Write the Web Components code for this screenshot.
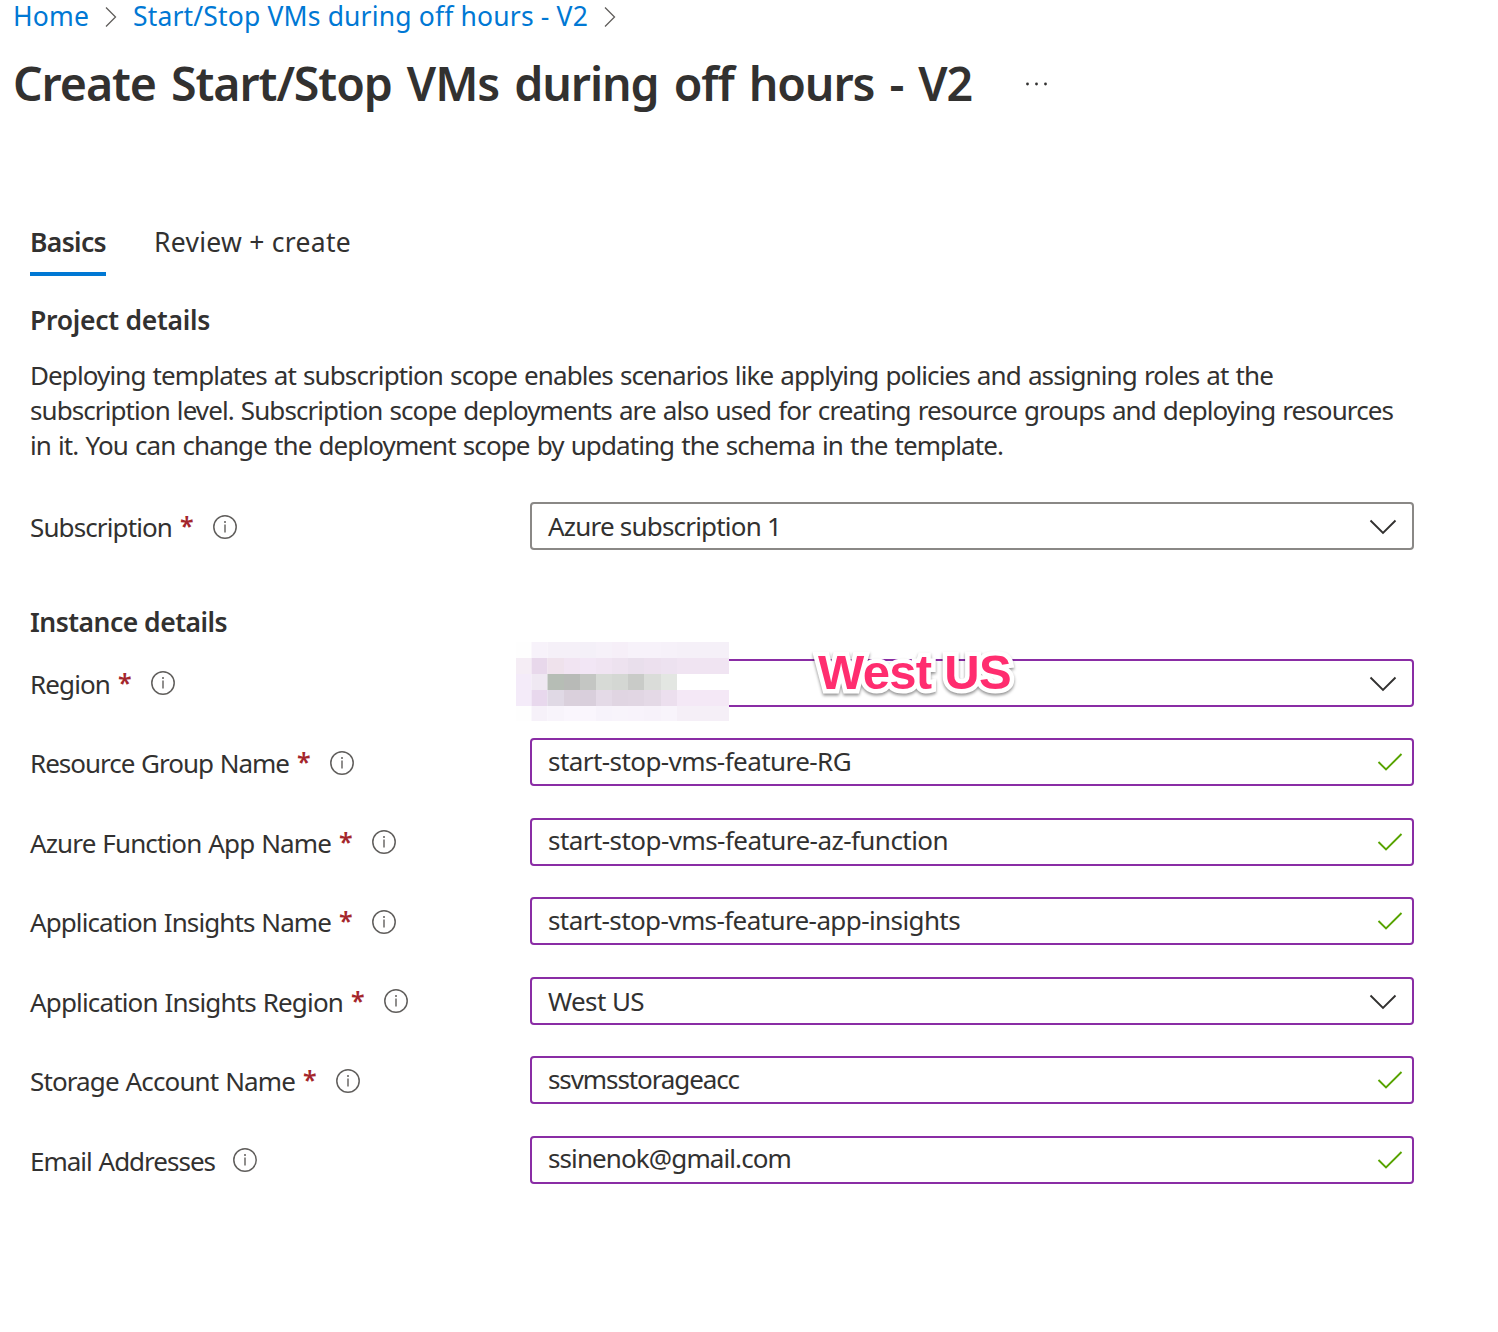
<!DOCTYPE html>
<html lang="en">
<head>
<meta charset="utf-8">
<title>Create Start/Stop VMs during off hours - V2</title>
<style>
html, body { margin: 0; background: #fff; }
body { font: 26px/35px "Noto Sans", "Open Sans", sans-serif; color: #323130; overflow: hidden; }
</style>
</head>
<body>
<azure-create-page></azure-create-page>
<script>
class Base extends HTMLElement {
  connectedCallback() {
    if (this.shadowRoot) return;
    this.attachShadow({ mode: 'open' }).innerHTML = this.render();
  }
  a(name) { return this.getAttribute(name) || ''; }
}

const chevronRight = `<svg width="12" height="22" viewBox="0 0 12 22"><path d="M1 1.5 10.5 11 1 20.5" fill="none" stroke="#605e5c" stroke-width="1.3"/></svg>`;

customElements.define('az-breadcrumb', class extends Base {
  render() {
    return `<style>
      :host { display: flex; align-items: flex-start; height: 36px; font-size: 26.5px; line-height: 33px; padding-left: 13px; color: #0078d4; }
      svg { display: block; margin-top: 6px; }
      svg:nth-of-type(1) { margin: 6px 16px 0 16px; }
      svg:nth-of-type(2) { margin-left: 16px; }
    </style><fit-text w="76">Home</fit-text>${chevronRight}<fit-text w="455">Start/Stop VMs during off hours - V2</fit-text>${chevronRight}`;
  }
});

customElements.define('az-title', class extends Base {
  render() {
    return `<style>
      :host { display: flex; height: 64px; line-height: 64px; padding-left: 13px; margin-top: 15px; font-size: 46.5px; font-weight: 600; word-spacing: 4px; }
      svg { display: block; margin: 30px 0 0 53px; }
    </style><fit-text w="959"><slot></slot></fit-text>
    <svg width="24" height="6" viewBox="0 0 24 6" fill="#323130"><circle cx="2.5" cy="3" r="1.4"/><circle cx="11.5" cy="3" r="1.4"/><circle cx="20.5" cy="3" r="1.4"/></svg>`;
  }
});

customElements.define('az-tab', class extends Base {
  render() {
    return `<style>
      :host { display: block; font-size: 26.5px; padding-bottom: 12px; border-bottom: 4px solid transparent; }
      :host([selected]) { border-color: #0078d4; font-weight: 600; }
    </style><fit-text w="${this.a('w')}"><slot></slot></fit-text>`;
  }
});

customElements.define('az-heading', class extends Base {
  render() {
    return `<style>:host { display: block; font-size: 26.5px; line-height: 36px; font-weight: 600; }</style><fit-text w="${this.a('w')}"><slot></slot></fit-text>`;
  }
});

customElements.define('az-info', class extends Base {
  render() {
    return `<style>:host { display: block; height: 24px; } svg { display: block; }</style>
    <svg width="24" height="24" viewBox="0 0 24 24"><circle cx="12" cy="12" r="11.2" fill="none" stroke="#605e5c" stroke-width="1.5"/><path d="M12 9.6V17.4" stroke="#605e5c" stroke-width="1.4"/><circle cx="12" cy="7" r="1" fill="#605e5c"/></svg>`;
  }
});

customElements.define('az-field', class extends Base {
  render() {
    const select = this.hasAttribute('select');
    const icon = select
      ? `<svg class="icon" width="28" height="16" viewBox="0 0 28 16"><path d="M1.5 1.5 14 14 26.5 1.5" fill="none" stroke="#323130" stroke-width="1.9"/></svg>`
      : `<svg class="icon" width="26" height="18" viewBox="0 0 26 18"><path d="M1.5 9 9 16.5 24.5 1" fill="none" stroke="#57a300" stroke-width="1.9"/></svg>`;
    return `<style>
      :host { display: flex; height: 48px; position: relative; }
      .label { width: 500px; display: flex; line-height: 50px; word-spacing: 1px; }
      .star { width: 13px; margin-left: 8px; color: #a4262c; font-size: 25px; font-weight: 600; line-height: 47px; }
      az-info { margin: 12.4px 0 0 20px; }
      :host([neutral]) az-info { margin-top: 13px; }
      az-info.plain { margin-left: 18px; }
      .box { box-sizing: border-box; width: 884px; height: 48px; border: 2px solid #8a2da5; border-radius: 4px; display: flex; justify-content: space-between; align-items: center; padding-left: 16px; line-height: 44px; }
      :host([neutral]) .box { border-color: #8a8886; }
      .value { margin-top: ${select ? 0 : -3}px; }
      .icon { display: block; margin: ${select ? '3px 15px 0 0' : '0 9px 0 0'}; }
      :host([neutral]) .icon { margin-top: 1px; }
    </style>
    <div class="label"><fit-text w="${this.a('lw')}">${this.a('label')}</fit-text>${this.hasAttribute('required') ? '<span class="star">*</span><az-info></az-info>' : '<az-info class="plain"></az-info>'}</div>
    <div class="box"><span class="value">${this.a('value') ? `<fit-text w="${this.a('vw')}">${this.a('value')}</fit-text>` : ''}</span>${icon}</div><slot></slot>`;
  }
});

/* Pixelated patch hiding the original region value. */
customElements.define('az-mosaic', class extends Base {
  render() {
    const xs = [0, 15.5, 31.5, 48, 64, 80, 96, 112, 128, 145, 161, 213];
    const ys = [0, 16, 32, 48, 64, 79];
    const rows = [
      '#fefefe #f7f2fa #f5f0f8 #f5f0f8 #f4f0f8 #f6f1f9 #f6eff8 #f7f2fa #f7f2fa #f6f1f9 #f5f0f8',
      '#f5edf5 #e8d8eb #efe2ec #f1e4f2 #f2e6f5 #f0e4f2 #ede2ef #e9dfec #ece0ee #ede2f0 #f0e4f2',
      '#f4ebf9 #efe8f2 #b6bdb5 #b8bab7 #c4c6c3 #d7dad6 #d4d7d3 #c9cbc8 #dadcd9 #e3e6e2 #ffffff',
      '#f4ebf9 #e8d8ed #e0d9e5 #dad0dc #d9cfdc #e4dae7 #e0d5e2 #e1d6e3 #e4d9e6 #ecdfee #f4e8f6',
      '#fefefe #f6f1f9 #f8f4fb #faf6fd #faf6fd #f7f3fb #f8f4fb #f8f3fb #f7f2fa #f8f4fb #f5eff7'];
    let rects = '';
    rows.forEach((row, j) => row.split(' ').forEach((c, i) => {
      rects += `<rect x="${xs[i]}" y="${ys[j]}" width="${xs[i + 1] - xs[i]}" height="${ys[j + 1] - ys[j]}" fill="${c}"/>`;
    }));
    return `<style>:host { position: absolute; left: 516px; top: -17px; } svg { display: block; }</style>
    <svg width="213" height="79" viewBox="0 0 213 79"><rect width="213" height="79" fill="#fff"/>${rects}</svg>`;
  }
});

customElements.define('az-callout', class extends Base {
  render() {
    return `<style>
      :host { position: absolute; left: 818px; top: -14.5px; font: bold 49px/56px "Liberation Sans", Arial, sans-serif; color: #ff2d6f;
        -webkit-text-stroke: 9px #fff; paint-order: stroke fill; stroke-linejoin: round; filter: drop-shadow(0 2px 1.5px rgba(0,0,0,.42)); }
    </style><fit-text w="193"><slot></slot></fit-text>`;
  }
});

customElements.define('azure-create-page', class extends Base {
  render() {
    return `<style>
      :host { display: flex; flex-direction: column; width: 1498px; height: 1332px; background: #fff; overflow: hidden; }
      .tabs { display: flex; gap: 48px; padding-left: 30px; margin-top: 110px; }
      .tabs az-tab { flex: none; }
      .body { display: flex; flex-direction: column; }
      .body > az-heading { padding-left: 30px; }
      .project { margin-top: 26px; }
      .instance { margin-top: 54px; }
      p { display: flex; flex-direction: column; margin: 20px 0 39px; padding-left: 30px; word-spacing: 1.2px; }
      az-field { margin-left: 30px; }
      .fields { display: flex; flex-direction: column; gap: 31.5px; margin-top: 18.9px; }
      az-field.region { margin-left: 0; padding-left: 30px; }
    </style>
    <az-breadcrumb></az-breadcrumb>
    <az-title>Create Start/Stop VMs during off hours - V2</az-title>
    <div class="tabs"><az-tab selected w="76">Basics</az-tab><az-tab w="197">Review + create</az-tab></div>
    <div class="body">
      <az-heading class="project" w="180">Project details</az-heading>
      <p><fit-text w="1243">Deploying templates at subscription scope enables scenarios like applying policies and assigning roles at the</fit-text>
      <fit-text w="1363">subscription level. Subscription scope deployments are also used for creating resource groups and deploying resources</fit-text>
      <fit-text w="973">in it. You can change the deployment scope by updating the schema in the template.</fit-text></p>
      <az-field neutral select required label="Subscription" lw="142" value="Azure subscription 1" vw="233"></az-field>
      <az-heading class="instance" w="197">Instance details</az-heading>
      <div class="fields">
        <az-field class="region" select required label="Region" lw="80"><az-mosaic></az-mosaic><az-callout>West US</az-callout></az-field>
        <az-field required label="Resource Group Name" lw="259" value="start-stop-vms-feature-RG" vw="303"></az-field>
        <az-field required label="Azure Function App Name" lw="301" value="start-stop-vms-feature-az-function" vw="400"></az-field>
        <az-field required label="Application Insights Name" lw="301" value="start-stop-vms-feature-app-insights" vw="412"></az-field>
        <az-field select required label="Application Insights Region" lw="313" value="West US" vw="96"></az-field>
        <az-field required label="Storage Account Name" lw="265" value="ssvmsstorageacc" vw="191"></az-field>
        <az-field label="Email Addresses" lw="185" value="ssinenok@gmail.com" vw="243"></az-field>
      </div>
    </div>`;
  }
});

/* One line of text whose tracking is adjusted so that it fills the width "w". */
customElements.define('fit-text', class extends Base {
  render() { return `<style>:host { display: block; white-space: nowrap; } span { display: inline-block; }</style><span><slot></slot></span>`; }
  connectedCallback() {
    super.connectedCallback();
    const w = +this.a('w');
    const span = this.shadowRoot.querySelector('span');
    const slot = this.querySelector('slot');
    const text = slot ? slot.assignedNodes().map(n => n.textContent).join('') : this.textContent;
    this.style.width = w + 'px';
    span.style.letterSpacing = (w - span.getBoundingClientRect().width) / text.length + 'px';
  }
});
</script>
</body>
</html>
